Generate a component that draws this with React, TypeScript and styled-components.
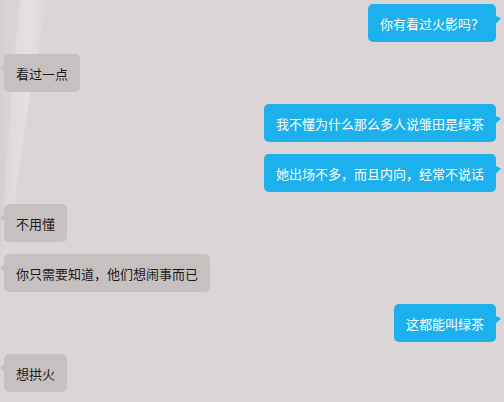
import React from "react";
import styled, { createGlobalStyle } from "styled-components";

const Global = createGlobalStyle`
  html, body { margin: 0; padding: 0; }
  body {
    width: 504px;
    height: 402px;
    overflow: hidden;
    background: #dcd5d5;
    font-family: "Noto Sans CJK SC", "Microsoft YaHei", sans-serif;
  }
`;

const Screen = styled.div`
  position: relative;
  width: 504px;
  height: 402px;
  background: #dcd5d5;
  overflow: hidden;
`;

const Streak = styled.svg`
  position: absolute;
  left: 0;
  top: 0;
  pointer-events: none;
`;

const List = styled.div`
  position: relative;
  display: flex;
  flex-direction: column;
  gap: 12px;
  padding: 4px 8px 0 4px;
`;

const Row = styled.div<{ $me?: boolean }>`
  display: flex;
  justify-content: ${(p) => (p.$me ? "flex-end" : "flex-start")};
`;

const Bubble = styled.div<{ $me?: boolean }>`
  position: relative;
  height: 38px;
  box-sizing: border-box;
  display: flex;
  align-items: center;
  padding: 0 12px;
  border-radius: 5px;
  font-size: 13px;
  letter-spacing: 0;
  white-space: nowrap;
  color: ${(p) => (p.$me ? "#ffffff" : "#1a1a1a")};
  background: ${(p) => (p.$me ? "#1cb1ec" : "#c6c0c0")};

  &::after {
    content: "";
    position: absolute;
    top: 10px;
    ${(p) =>
      p.$me
        ? `right: -5px;
           border-left: 6px solid #1cb1ec;
           border-top: 6px solid transparent;
           border-bottom: 3px solid transparent;
           transform: skewY(-25deg);`
        : `left: -4px;
           border-right: 5px solid #c6c0c0;
           border-top: 3px solid transparent;
           border-bottom: 6px solid transparent;
           transform: skewY(-25deg);`}
  }
`;

type Msg = { me: boolean; text: string };

const messages: Msg[] = [
  { me: true, text: "你有看过火影吗？" },
  { me: false, text: "看过一点" },
  { me: true, text: "我不懂为什么那么多人说雏田是绿茶" },
  { me: true, text: "她出场不多，而且内向，经常不说话" },
  { me: false, text: "不用懂" },
  { me: false, text: "你只需要知道，他们想闹事而已" },
  { me: true, text: "这都能叫绿茶" },
  { me: false, text: "想拱火" },
];

export default function App() {
  return (
    <Screen>
      <Global />
      <Streak width="80" height="402" viewBox="0 0 80 402">
        <defs>
          <linearGradient id="sg" x1="0" y1="0" x2="1" y2="0">
            <stop offset="0" stopColor="#ffffff" stopOpacity="0" />
            <stop offset="0.6" stopColor="#ffffff" stopOpacity="0.28" />
            <stop offset="1" stopColor="#ffffff" stopOpacity="0" />
          </linearGradient>
        </defs>
        <path d="M0 0 L48 0 C30 80 14 200 2 310 L0 310 Z" fill="url(#sg)" />
        <path d="M0 0 L20 0 C10 100 4 200 0 260 Z" fill="#c9c3c3" opacity="0.3" />
      </Streak>
      <List>
        {messages.map((m, i) => (
          <Row key={i} $me={m.me}>
            <Bubble $me={m.me}>{m.text}</Bubble>
          </Row>
        ))}
      </List>
    </Screen>
  );
}
